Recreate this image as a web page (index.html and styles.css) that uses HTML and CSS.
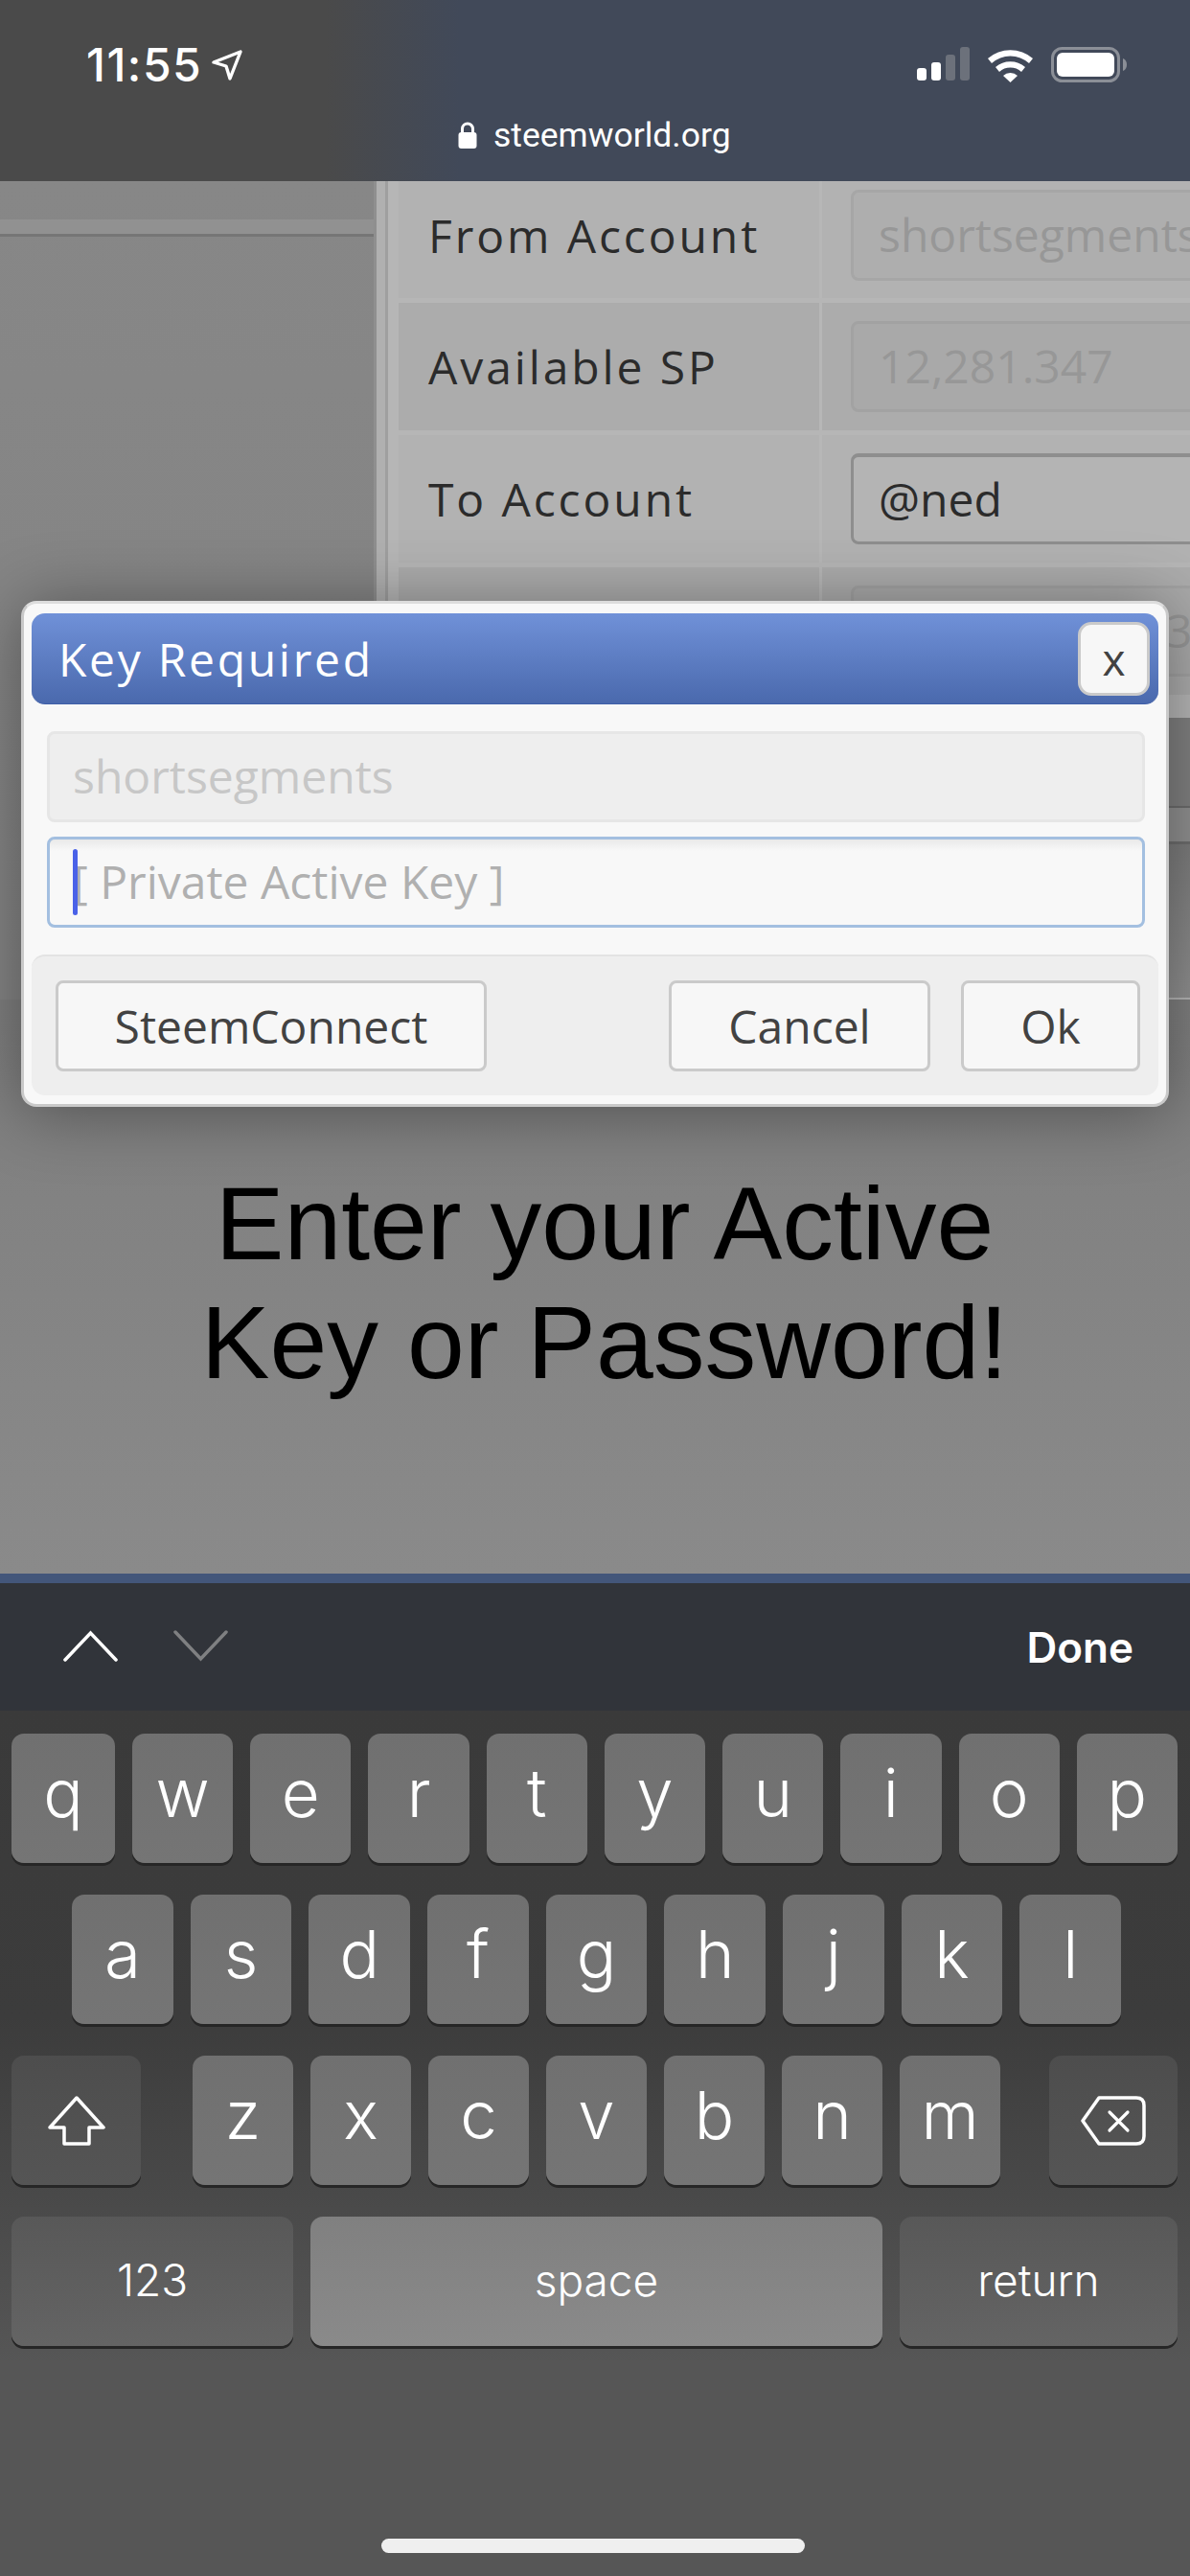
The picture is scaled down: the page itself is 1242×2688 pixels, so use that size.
FILE: index.html
```html
<!DOCTYPE html>
<html lang="en">

<head>
  <meta charset="UTF-8">
  <title>steemworld.org</title>
  <link rel="stylesheet" href="styles.css">
</head>

<body>
  <div class="phone">
    <header class="status">
      <div class="status-top">
        <div class="clock">
          <span>11:55</span>
          <svg class="arrow" width="32" height="32" viewBox="0 0 32 32">
            <path d="M2 13 L30 2 L19 30 L15 17 Z" fill="none" stroke="#fff" stroke-width="3.4" stroke-linejoin="round"/>
          </svg>
        </div>
        <div class="status-icons">
          <svg width="56" height="36" viewBox="0 0 56 36">
            <rect x="0" y="22" width="10" height="13" rx="3" fill="#fff"/>
            <rect x="15" y="16" width="10" height="19" rx="3" fill="#fff"/>
            <rect x="30" y="8" width="10" height="27" rx="3" fill="#6c717b"/>
            <rect x="45" y="0" width="10" height="35" rx="3" fill="#6c717b"/>
          </svg>
          <svg width="48" height="37" viewBox="0 0 48 37">
            <path d="M0 12 A36 36 0 0 1 47 12 L43 17 A29 29 0 0 0 4 17 Z" fill="#fff"/>
            <path d="M8 21 A24 24 0 0 1 39 21 L35 26 A17 17 0 0 0 12 26 Z" fill="#fff"/>
            <path d="M16 30 A11 11 0 0 1 31 30 L23.500 37 Z" fill="#fff"/>
          </svg>
          <svg width="80" height="38" viewBox="0 0 80 38">
            <rect x="1.500" y="1.500" width="69" height="34" rx="10" fill="none" stroke="#8b8f97" stroke-width="3"/>
            <rect x="6" y="6" width="60" height="25" rx="6" fill="#fff"/>
            <path d="M75 12 C78 13 79 16 79 18.500 C79 21 78 24 75 25 Z" fill="#8b8f97"/>
          </svg>
        </div>
      </div>
      <div class="url">
        <svg width="20" height="28" viewBox="0 0 20 28">
          <path d="M4.500 13 V7.500 A5.500 5.500 0 0 1 15.500 7.500 V13" fill="none" stroke="#fff" stroke-width="3"/>
          <rect x="0.500" y="11" width="19" height="17" rx="3" fill="#fff"/>
        </svg>
        <span>steemworld.org</span>
      </div>
    </header>

    <main class="page">
      <div class="behind">
        <div class="side">
          <div class="side-band"></div>
        </div>
        <div class="panel">
          <div class="rows">
            <div class="row row-first">
              <div class="row-label">From Account</div>
              <div class="row-value">
                <div class="field field-off">shortsegments</div>
              </div>
            </div>
            <div class="row row-dark">
              <div class="row-label">Available SP</div>
              <div class="row-value">
                <div class="field field-off">12,281.347</div>
              </div>
            </div>
            <div class="row">
              <div class="row-label">To Account</div>
              <div class="row-value">
                <div class="field field-on">@ned</div>
              </div>
            </div>
            <div class="row row-dark">
              <div class="row-label"></div>
              <div class="row-value">
                <div class="field field-off field-tail">3</div>
              </div>
            </div>
            <div class="row row-low"></div>
            <div class="row row-strip"></div>
            <div class="row row-last"></div>
          </div>
        </div>
      </div>

      <p class="notice">Enter your Active<br>Key or Password!</p>

      <div class="dialog">
        <div class="dialog-title">
          <span>Key Required</span>
          <div class="btn btn-close">x</div>
        </div>
        <div class="dialog-body">
          <div class="dialog-input input-off">shortsegments</div>
          <div class="dialog-input input-focus"><i class="caret"></i>[ Private Active Key ]</div>
        </div>
        <div class="dialog-foot">
          <div class="btn btn-sc">SteemConnect</div>
          <div class="foot-right">
            <div class="btn btn-cancel">Cancel</div>
            <div class="btn btn-ok">Ok</div>
          </div>
        </div>
      </div>
    </main>

    <div class="blue-line"></div>

    <div class="toolbar">
      <div class="toolbar-arrows">
        <svg width="57" height="33" viewBox="0 0 57 33">
          <path d="M2 31 L28.500 3 L55 31" fill="none" stroke="#fff" stroke-width="3.500" stroke-linecap="round"/>
        </svg>
        <svg width="57" height="33" viewBox="0 0 57 33">
          <path d="M2 2 L28.500 30 L55 2" fill="none" stroke="#7f8082" stroke-width="3.500" stroke-linecap="round"/>
        </svg>
      </div>
      <div class="done">Done</div>
    </div>

    <div class="keyboard">
      <div class="kb-row">
        <div class="key key-q">q</div>
        <div class="key">w</div>
        <div class="key">e</div>
        <div class="key">r</div>
        <div class="key">t</div>
        <div class="key">y</div>
        <div class="key">u</div>
        <div class="key">i</div>
        <div class="key">o</div>
        <div class="key">p</div>
      </div>
      <div class="kb-row kb-row-2">
        <div class="key">a</div>
        <div class="key">s</div>
        <div class="key">d</div>
        <div class="key">f</div>
        <div class="key">g</div>
        <div class="key">h</div>
        <div class="key">j</div>
        <div class="key">k</div>
        <div class="key">l</div>
      </div>
      <div class="kb-row kb-row-3">
        <div class="key key-fn key-shift">
          <svg width="60" height="52" viewBox="0 0 60 52">
            <path d="M30 2 L58 33 H43 V50 H17 V33 H2 Z" fill="none" stroke="#fff" stroke-width="3.500" stroke-linejoin="round"/>
          </svg>
        </div>
        <div class="letters">
          <div class="key">z</div>
          <div class="key">x</div>
          <div class="key">c</div>
          <div class="key">v</div>
          <div class="key">b</div>
          <div class="key">n</div>
          <div class="key">m</div>
        </div>
        <div class="key key-fn key-del">
          <svg width="68" height="52" viewBox="0 0 68 52">
            <path d="M2 26 L19 2 H58 Q66 2 66 10 V42 Q66 50 58 50 H19 Z" fill="none" stroke="#fff" stroke-width="3.500" stroke-linejoin="round"/>
            <path d="M30 17 L49 36 M49 17 L30 36" stroke="#fff" stroke-width="3.200" stroke-linecap="round"/>
          </svg>
        </div>
      </div>
      <div class="kb-row">
        <div class="key key-wide key-123">123</div>
        <div class="key key-wide key-space">space</div>
        <div class="key key-wide key-return">return</div>
      </div>
      <div class="home-bar"></div>
    </div>
  </div>
</body>

</html>
```

FILE: styles.css
```css
/* phone frame */
body {
  margin: 0;
  padding: 0;
  background: #555;
}

.phone {
  width: 1242px;
  height: 2688px;
  display: flex;
  flex-direction: column;
  overflow: hidden;
  font-family: "Open Sans", sans-serif;
}

/* status bar and url */
.status {
  height: 189px;
  box-sizing: border-box;
  padding: 49px 65px 0 90px;
  background: linear-gradient(90deg, #4a4a4a 0, #4a4a4a 340px, #414959 480px, #414959 100%);
  color: white;
  font-family: Inter, sans-serif;
}

.status-top {
  display: flex;
  justify-content: space-between;
  height: 38px;
}

.clock {
  display: flex;
  align-items: center;
  gap: 10px;
  font-size: 48px;
  font-weight: 500;
  line-height: 38px;
  letter-spacing: 1.500px;
}

.status-icons {
  display: flex;
  align-items: flex-start;
  gap: 18px;
}

.url {
  margin: 38px 0 0 388px;
  display: flex;
  align-items: center;
  gap: 17px;
  height: 32px;
  font-size: 35.500px;
  font-weight: 400;
  font-family: Roboto, sans-serif;
}

/* dimmed page behind the dialog */
.page {
  position: relative;
  height: 1453px;
  background: linear-gradient(180deg, #7f7f7f 0, #7f7f7f 854px, #808080 966px, #8a8a8a 1453px);
  overflow: hidden;
}

.behind {
  display: flex;
  height: 854px;
}

.side {
  flex: none;
  width: 390px;
  padding-top: 40px;
  box-sizing: border-box;
  background: linear-gradient(180deg, #878787 0, #858585 420px, #848484 100%);
}

.side-band {
  height: 15px;
  background: #919191;
  border-bottom: 3px solid #767676;
}

.panel {
  flex: 1;
  min-width: 0;
  box-sizing: border-box;
  border-left: 3px solid #8f8f8f;
  padding-left: 23px;
  background: linear-gradient(90deg, #b0b0b0 0, #b0b0b0 9px, #9f9f9f 9px, #9f9f9f 12px, #b6b6b6 12px);
}

.rows {
  display: flex;
  flex-direction: column;
  gap: 5px;
}

.row {
  height: 133px;
  display: flex;
  background: #b2b2b2;
  color: #2b2b2b;
}

.row-first {
  height: 122px;
}

.row-dark {
  background: #acacac;
}

.row-low {
  height: 92px;
  background: #808080;
  border-bottom: 2px solid #6c6c6c;
  margin-top: 19px;
}

.row-strip {
  height: 35px;
  margin-top: -5px;
  background: #909090;
}

.row-last {
  height: 160px;
  margin-top: -5px;
  background: linear-gradient(180deg, #7c7c7c, #909090);
  border-top: 3px solid #6e6e6e;
}

.row-label {
  width: 442px;
  box-sizing: border-box;
  padding-left: 31px;
  border-right: 3px solid #b7b7b7;
  font-size: 48px;
  letter-spacing: 2.900px;
  line-height: 134px;
  white-space: nowrap;
}

.row-first .row-label {
  line-height: 114px;
}

.row-value {
  flex: 1;
  min-width: 0;
  padding: 19px 0 0 30px;
  overflow: hidden;
}

.row-first .row-value {
  padding-top: 9px;
}

.field {
  height: 95px;
  width: 500px;
  box-sizing: border-box;
  padding-left: 26px;
  border-radius: 8px;
  font-size: 48px;
  line-height: 88px;
  white-space: nowrap;
}

.field-off {
  background: #aeaeae;
  border: 3px solid #a6a6a6;
  color: #979797;
}

.row-dark .field-off {
  background: #a9a9a9;
  border-color: #a2a2a2;
}

.field-on {
  background: #b4b4b4;
  border: 3px solid #8e8e8e;
  border-top-width: 4px;
  color: #2b2b2b;
}

/* only the end of this value shows past the dialog */
.field-tail {
  padding-left: 326px;
}

.notice {
  margin: 0;
  padding: 172px 0 0 20px;
  text-align: center;
  font-family: "Liberation Sans", sans-serif;
  font-size: 107.500px;
  line-height: 124px;
  color: black;
}

/* dialog */
.dialog {
  position: absolute;
  left: 22px;
  top: 438px;
  width: 1198px;
  height: 528px;
  box-sizing: border-box;
  padding: 10px 8px 9px 8px;
  background: #f8f8f8;
  border: 3px solid #c9c9c9;
  border-top-color: #dddddd;
  border-radius: 16px;
  box-shadow: 0 4px 70px rgba(0, 0, 0, 0.38);
}

.dialog-title {
  height: 95px;
  display: flex;
  align-items: center;
  justify-content: space-between;
  box-sizing: border-box;
  padding: 0 9px 0 28px;
  border-radius: 14px;
  border-bottom: 1px solid #3f5fa8;
  background: linear-gradient(180deg, #7091d8 0, #4a69ad 100%);
  color: white;
  font-size: 48px;
  letter-spacing: 2.700px;
}

.dialog-body {
  padding: 28px 14px 0 16px;
  display: flex;
  flex-direction: column;
  gap: 15px;
}

.dialog-input {
  height: 95px;
  box-sizing: border-box;
  padding-left: 24px;
  border-radius: 8px;
  font-size: 48px;
  line-height: 88px;
}

.input-off {
  background: #eeeeee;
  border: 3px solid #e6e6e6;
  color: #c7c7c7;
}

.input-focus {
  position: relative;
  background: linear-gradient(180deg, #e9e9e9 0, #f8f8f8 12px);
  border: 3px solid #a3bfe0;
  color: #b0b0b0;
}

.caret {
  position: absolute;
  left: 24px;
  top: 10px;
  width: 5px;
  height: 69px;
  border-radius: 3px;
  background: #4a62e8;
}

.dialog-foot {
  margin-top: 28px;
  height: 147px;
  box-sizing: border-box;
  padding: 25px 19px 0 25px;
  display: flex;
  justify-content: space-between;
  background: #eeeeee;
  border-top: 2px solid #e3e3e3;
  border-radius: 14px;
}

.foot-right {
  display: flex;
  gap: 32px;
}

.btn {
  height: 95px;
  box-sizing: border-box;
  display: flex;
  align-items: center;
  justify-content: center;
  background: #f7f7f7;
  border: 3px solid #cacaca;
  border-radius: 8px;
  color: #424242;
  font-size: 48px;
  letter-spacing: 0;
}

.btn-close {
  width: 75px;
  height: 77px;
  border-radius: 14px;
  font-size: 46px;
}

.btn-sc {
  width: 450px;
}

.btn-cancel {
  width: 273px;
}

.btn-ok {
  width: 187px;
}

/* keyboard */
.blue-line {
  height: 10px;
  background: #43567a;
}

.toolbar {
  height: 133px;
  box-sizing: border-box;
  padding: 0 59px 0 66px;
  display: flex;
  align-items: center;
  justify-content: space-between;
  background: #31343a;
}

.toolbar-arrows {
  display: flex;
  gap: 58px;
  padding-bottom: 2px;
}

.done {
  color: white;
  font-family: Inter, sans-serif;
  font-size: 44px;
  font-weight: 600;
}

.keyboard {
  flex: 1;
  box-sizing: border-box;
  padding: 24px 13px 0 12px;
  display: flex;
  flex-direction: column;
  gap: 33px;
  background: linear-gradient(180deg, #3a3a3a 0, #3c3c3c 320px, #4a4a4a 520px, #565656 680px, #565656 100%);
  font-family: Inter, sans-serif;
  color: white;
}

.kb-row {
  height: 135px;
  display: flex;
  gap: 18px;
}

.kb-row-2 {
  padding: 0 59px 0 63px;
}

.kb-row-3 {
  justify-content: space-between;
}

.letters {
  flex: 1;
  display: flex;
  gap: 18px;
  padding: 0 33px 0 36px;
}

.key {
  flex: 1;
  display: flex;
  align-items: center;
  justify-content: center;
  padding-bottom: 12px;
  box-sizing: border-box;
  border-radius: 13px;
  background: linear-gradient(180deg, #707070, #757575);
  box-shadow: 0 3px 0 #262626;
  font-size: 69px;
  font-weight: 300;
}

.key-q {
  flex: none;
  width: 108px;
}

.key-fn {
  flex: none;
  background: linear-gradient(180deg, #4d4d4d, #555555);
}

.key-shift {
  width: 135px;
  padding-top: 12px;
}

.key-del {
  width: 134px;
  padding-top: 12px;
}

.key-wide {
  flex: none;
  font-size: 46px;
  font-weight: 300;
  padding-bottom: 4px;
}

.key-123 {
  width: 294px;
  background: linear-gradient(180deg, #585858, #646464);
}

.key-space {
  flex: 1;
  background: linear-gradient(180deg, #808080, #8a8a8a);
}

.key-return {
  width: 290px;
  background: linear-gradient(180deg, #585858, #646464);
}

.home-bar {
  align-self: center;
  width: 442px;
  height: 15px;
  margin: 168px 0 0 -4px;
  border-radius: 8px;
  background: #efefef;
}
```
